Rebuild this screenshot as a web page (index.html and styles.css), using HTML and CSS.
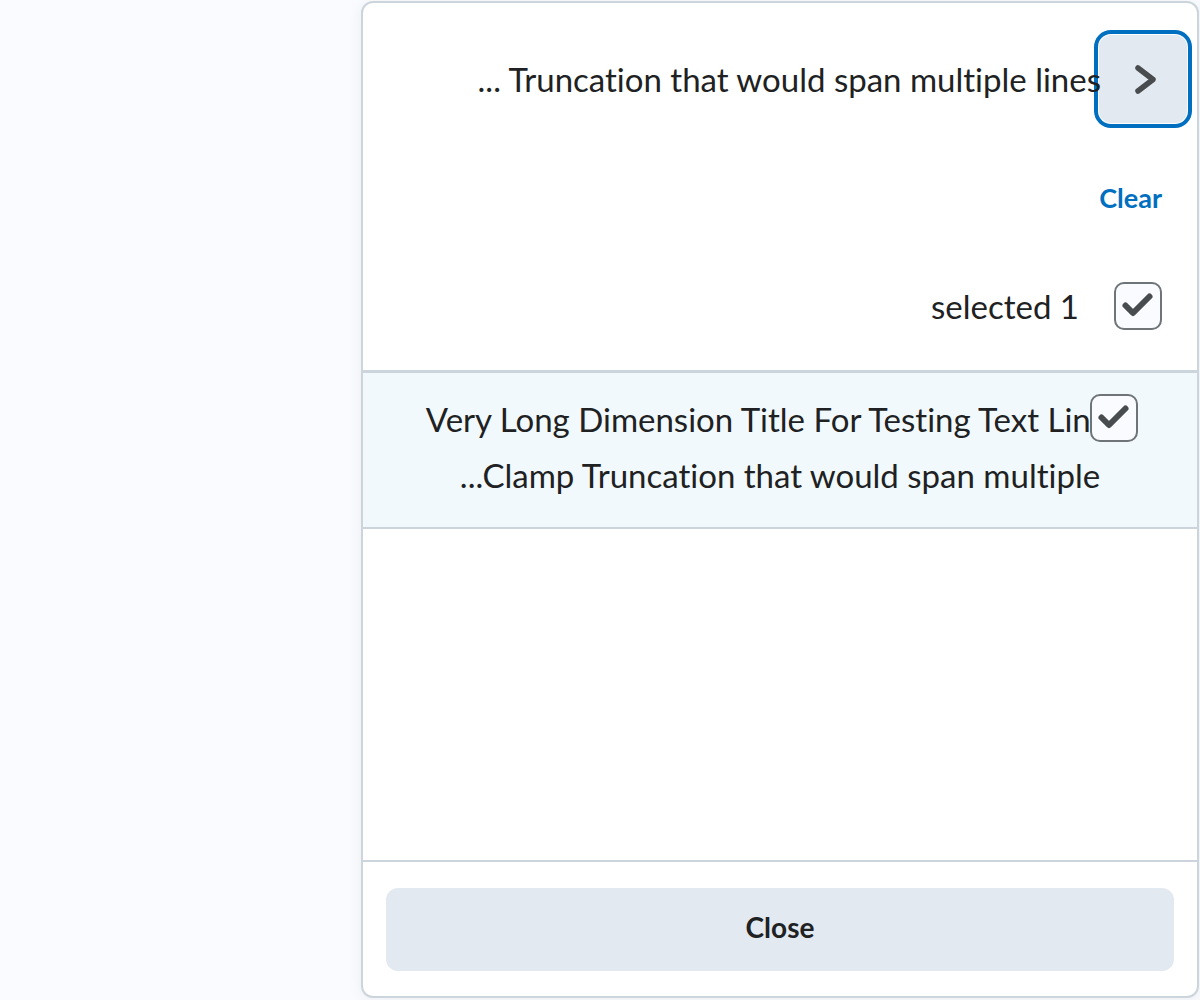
FILE: index.html
```html
<!DOCTYPE html>
<html lang="en">
<head>
<meta charset="utf-8">
<title>Filter</title>
<link rel="stylesheet" href="styles.css">
</head>
<body>
<div class="panel">
  <div class="header">
    <div class="title-row">
      <span class="title-text">... Truncation that would span multiple lines</span>
      <button class="nav-btn" aria-label="Next">
        <svg width="88" height="88" viewBox="0 0 88 88"><path d="M39 33 L54 44.5 L39 56" fill="none" stroke="#494c4e" stroke-width="5.5" stroke-linecap="round" stroke-linejoin="round"/></svg>
      </button>
    </div>
    <div class="clear-row"><span class="clear">Clear</span></div>
    <div class="selected-row">
      <span class="selected-text">selected 1</span>
      <span class="checkbox">
        <svg width="44" height="44" viewBox="0 0 44 44"><path d="M9.5 21.5 L17 29 L33.5 12.5" fill="none" stroke="#494c4e" stroke-width="6" stroke-linecap="round" stroke-linejoin="round"/></svg>
      </span>
    </div>
  </div>
  <div class="list">
    <div class="item">
      <div class="item-text">
        <div class="line line-first">Very Long Dimension Title For Testing Text Line</div>
        <div class="line">...Clamp Truncation that would span multiple</div>
      </div>
      <span class="checkbox item-check">
        <svg width="44" height="44" viewBox="0 0 44 44"><path d="M9.5 21.5 L17 29 L33.5 12.5" fill="none" stroke="#494c4e" stroke-width="6" stroke-linecap="round" stroke-linejoin="round"/></svg>
      </span>
    </div>
  </div>
  <div class="footer">
    <button class="close-btn">Close</button>
  </div>
</div>
</body>
</html>
```

FILE: styles.css
```css
html, body {
  margin: 0;
  padding: 0;
}
body {
  background: #f9fbff;
  font-family: Lato, "Open Sans", sans-serif;
  font-variant-ligatures: none;
  color: #202122;
  width: 1200px;
  height: 1000px;
  overflow: hidden;
}
.panel {
  box-sizing: border-box;
  margin: 1px 0 0 361px;
  width: 838px;
  height: 997px;
  border: 2px solid #cdd5dc;
  border-radius: 12px;
  background: #ffffff;
  box-shadow: 0 2px 16px rgba(32, 33, 34, 0.06);
  display: flex;
  flex-direction: column;
  overflow: hidden;
}
.header {
  padding: 32px 0 40px 0;
  border-bottom: 3px solid #cdd5dc;
}
.title-row {
  display: flex;
  justify-content: flex-end;
  align-items: center;
  height: 88px;
  padding-right: 10px;
}
.title-text {
  position: relative;
  z-index: 1;
  font-size: 33px;
  line-height: 44px;
  white-space: nowrap;
  margin-right: -2px;
}
.nav-btn {
  width: 88px;
  height: 88px;
  padding: 0;
  border: none;
  border-radius: 12px;
  background: #e3e9f1;
  box-shadow: 0 0 0 1px #ffffff, 0 0 0 5px #006fbf;
  display: flex;
  align-items: center;
  justify-content: center;
  flex: none;
}
.nav-btn svg {
  display: block;
}
.clear-row {
  display: flex;
  justify-content: flex-end;
  padding: 55px 35px 0 0;
}
.clear {
  color: #006fbf;
  font-weight: 700;
  font-size: 27px;
  line-height: 40px;
}
.selected-row {
  display: flex;
  justify-content: flex-end;
  align-items: center;
  gap: 35px;
  padding: 64px 35px 0 0;
}
.selected-text {
  font-size: 33px;
  line-height: 40px;
}
.checkbox {
  box-sizing: border-box;
  width: 48px;
  height: 48px;
  border: 2px solid #6e7477;
  border-radius: 10px;
  background: #f9fbff;
  display: inline-block;
  flex: none;
}
.checkbox svg {
  display: block;
}
.list {
  flex: 1;
}
.item {
  position: relative;
  background: #f2f9fd;
  border-bottom: 2px solid #cdd5dc;
  padding: 18px 0 24px 0;
}
.item-text {
  text-align: center;
  font-size: 33px;
  line-height: 56px;
}
.line {
  white-space: nowrap;
}
.line-first {
  padding-right: 26px;
}
.item-check {
  position: absolute;
  top: 21px;
  right: 59px;
}
.footer {
  border-top: 2px solid #cdd5dc;
  padding: 26px 23px 25px 23px;
}
.close-btn {
  display: block;
  width: 100%;
  height: 83px;
  padding: 0 0 5px 0;
  border: none;
  border-radius: 12px;
  background: #e3e9f1;
  color: #202122;
  font-family: Lato, "Open Sans", sans-serif;
  font-weight: 700;
  font-size: 28px;
}
```
